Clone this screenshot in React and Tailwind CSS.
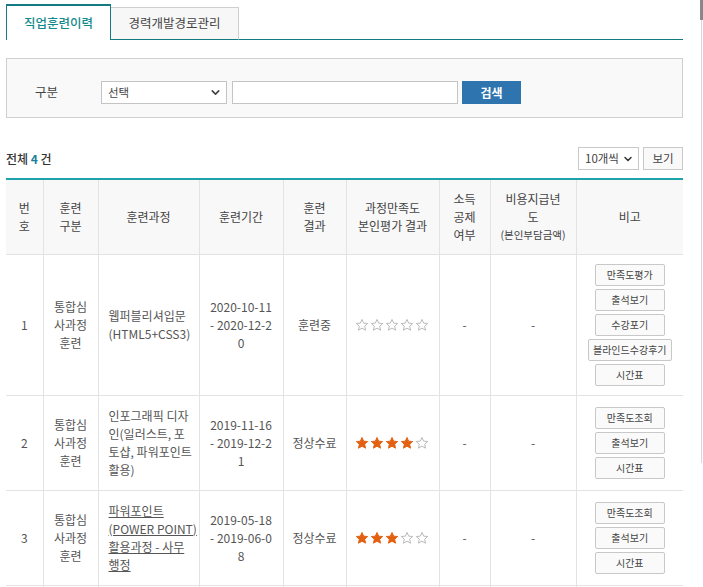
import React from "react";
import { ChevronDown } from "lucide-react";

const Star = ({ on }) => (
  <svg width="14" height="14" viewBox="0 0 24 24">
    <path
      d="M12 2.5l2.9 6.3 6.9.7-5.2 4.6 1.5 6.8L12 17.4l-6.1 3.5 1.5-6.8-5.2-4.6 6.9-.7z"
      fill={on ? "#e2600f" : "#fff"}
      stroke={on ? "#e2600f" : "#b5b5b5"}
      strokeWidth="1.6"
      strokeLinejoin="round"
    />
  </svg>
);

const rows = [
  {
    no: "1",
    title: ["웹퍼블리셔입문", "(HTML5+CSS3)"],
    date: ["2020-10-11", "- 2020-12-2", "0"],
    result: "훈련중",
    stars: 0,
    buttons: ["만족도평가", "출석보기", "수강포기", "블라인드수강후기", "시간표"],
  },
  {
    no: "2",
    title: ["인포그래픽 디자", "인(일러스트, 포", "토샵, 파워포인트", "활용)"],
    date: ["2019-11-16", "- 2019-12-2", "1"],
    result: "정상수료",
    stars: 4,
    buttons: ["만족도조회", "출석보기", "시간표"],
  },
  {
    no: "3",
    title: ["파워포인트", "(POWER POINT)", "활용과정 - 사무", "행정"],
    link: true,
    date: ["2019-05-18", "- 2019-06-0", "8"],
    result: "정상수료",
    stars: 3,
    buttons: ["만족도조회", "출석보기", "시간표"],
  },
];

const headers = [
  ["번", "호"],
  ["훈련", "구분"],
  ["훈련과정"],
  ["훈련기간"],
  ["훈련", "결과"],
  ["과정만족도", "본인평가 결과"],
  ["소득", "공제", "여부"],
  ["비용지급년", "도"],
  ["비고"],
];

const widths = [37, 55, 101, 84, 63, 93, 51, 86, 107];

export default function App() {
  return (
    <div className="relative min-h-[587px] bg-white font-['Noto_Sans_CJK_KR',sans-serif] text-[12px] text-[#555]">
      {/* scrollbar remnant */}
      <div className="absolute right-[1px] top-0 h-[463px] w-px bg-[#d8d8d8]" />
      <div className="absolute right-0 top-0 h-[20px] w-[3px] bg-[#888]" />

      <div className="w-[677px] ml-[6px] pt-[4px]">
        {/* tabs */}
        <div className="flex items-end">
          <div className="flex h-[36px] w-[105px] items-center justify-center border-x border-t-2 border-[#127a80] bg-white text-[12.5px] font-medium text-[#138a8c]">
            직업훈련이력
          </div>
          <div className="flex h-[33px] w-[128px] items-center justify-center border-r border-t border-[#cfcfcf] border-b border-b-[#127a80] bg-[#f7f7f7] text-[12.5px] text-[#444]">
            경력개발경로관리
          </div>
          <div className="flex-1 border-b border-[#127a80]" />
        </div>

        {/* search */}
        <div className="mt-[18px] flex h-[60px] items-center border border-[#cfcfcf] bg-[#f9f9f9] pl-[28px] pt-[9px]">
          <span className="w-[66px] text-[12.5px] text-[#444]">구분</span>
          <div className="flex h-[23px] w-[126px] items-center justify-between border border-[#c4c4c4] bg-white pl-[6px] pr-[4px] text-[11.5px] text-[#444]">
            <span>선택</span>
            <ChevronDown size={13} strokeWidth={3} className="text-[#444]" />
          </div>
          <div className="ml-[5px] h-[23px] w-[226px] border border-[#c4c4c4] bg-white" />
          <button className="ml-[4px] flex h-[23px] w-[59px] items-center justify-center bg-[#2e74ae] text-[12px] font-bold text-white">
            검색
          </button>
        </div>

        {/* count + view */}
        <div className="mt-[29px] flex items-center justify-between">
          <div className="text-[12px] font-medium text-[#333]">
            전체 <span className="font-bold text-[#1b7f9a]">4</span> 건
          </div>
          <div className="flex gap-[4px]">
            <div className="flex h-[23px] w-[61px] items-center justify-between border border-[#c9c9c9] bg-white pl-[6px] pr-[4px] text-[11.5px] text-[#444]">
              <span>10개씩</span>
              <ChevronDown size={12} strokeWidth={3} className="text-[#333]" />
            </div>
            <div className="flex h-[23px] w-[40px] items-center justify-center border border-[#c9c9c9] bg-[#f9f9f9] text-[11.5px] text-[#444]">
              보기
            </div>
          </div>
        </div>

        {/* table */}
        <table className="mt-[8px] w-full table-fixed border-collapse border-t-2 border-[#1fa3aa] text-center">
          <colgroup>
            {widths.map((w, i) => (
              <col key={i} style={{ width: w }} />
            ))}
          </colgroup>
          <thead>
            <tr className="h-[75px] bg-[#f8f8f8] text-[12px] leading-[18px] text-[#444]">
              {headers.map((h, i) => (
                <th
                  key={i}
                  className="border-b border-l border-[#e3e3e3] font-normal first:border-l-0"
                >
                  {h.map((l, j) => (
                    <div key={j}>{l}</div>
                  ))}
                  {i === 7 && <div className="text-[10.5px]">(본인부담금액)</div>}
                </th>
              ))}
            </tr>
          </thead>
          <tbody className="text-[12px] leading-[18px]">
            {rows.map((r) => (
              <tr key={r.no}>
                <td className="border-b border-[#e3e3e3] py-[10px]">{r.no}</td>
                <td className="border-b border-l border-[#e3e3e3] px-2">
                  <div>통합심</div>
                  <div>사과정</div>
                  <div>훈련</div>
                </td>
                <td className="border-b border-l border-[#e3e3e3] py-[11px] pl-[10px] text-left">
                  {r.title.map((l, j) => (
                    <div key={j} className={`whitespace-nowrap ${r.link ? "underline" : ""}`}>
                      {l}
                    </div>
                  ))}
                </td>
                <td className="border-b border-l border-[#e3e3e3]">
                  {r.date.map((l, j) => (
                    <div key={j}>{l}</div>
                  ))}
                </td>
                <td className="border-b border-l border-[#e3e3e3]">{r.result}</td>
                <td className="border-b border-l border-[#e3e3e3]">
                  <div className="flex justify-center gap-[1px] pr-[1px]">
                    {[0, 1, 2, 3, 4].map((k) => (
                      <Star key={k} on={k < r.stars} />
                    ))}
                  </div>
                </td>
                <td className="border-b border-l border-[#e3e3e3]">-</td>
                <td className="border-b border-l border-[#e3e3e3]">-</td>
                <td className="border-b border-l border-[#e3e3e3] py-[9px]">
                  <div className="flex flex-col items-center gap-[3px]">
                    {r.buttons.map((b) => (
                      <button
                        key={b}
                        className="flex h-[22px] min-w-[70px] items-center justify-center rounded-[2px] border border-[#c8c8c8] bg-[#fafafa] px-[4px] text-[10px] text-[#444]"
                      >
                        {b}
                      </button>
                    ))}
                  </div>
                </td>
              </tr>
            ))}
            {/* next row, only its top edge is in view */}
            <tr className="h-[20px]">
              {widths.map((w, i) => (
                <td key={i} className={i === 0 ? "" : "border-l border-[#e3e3e3]"} />
              ))}
            </tr>
          </tbody>
        </table>
      </div>
    </div>
  );
}
